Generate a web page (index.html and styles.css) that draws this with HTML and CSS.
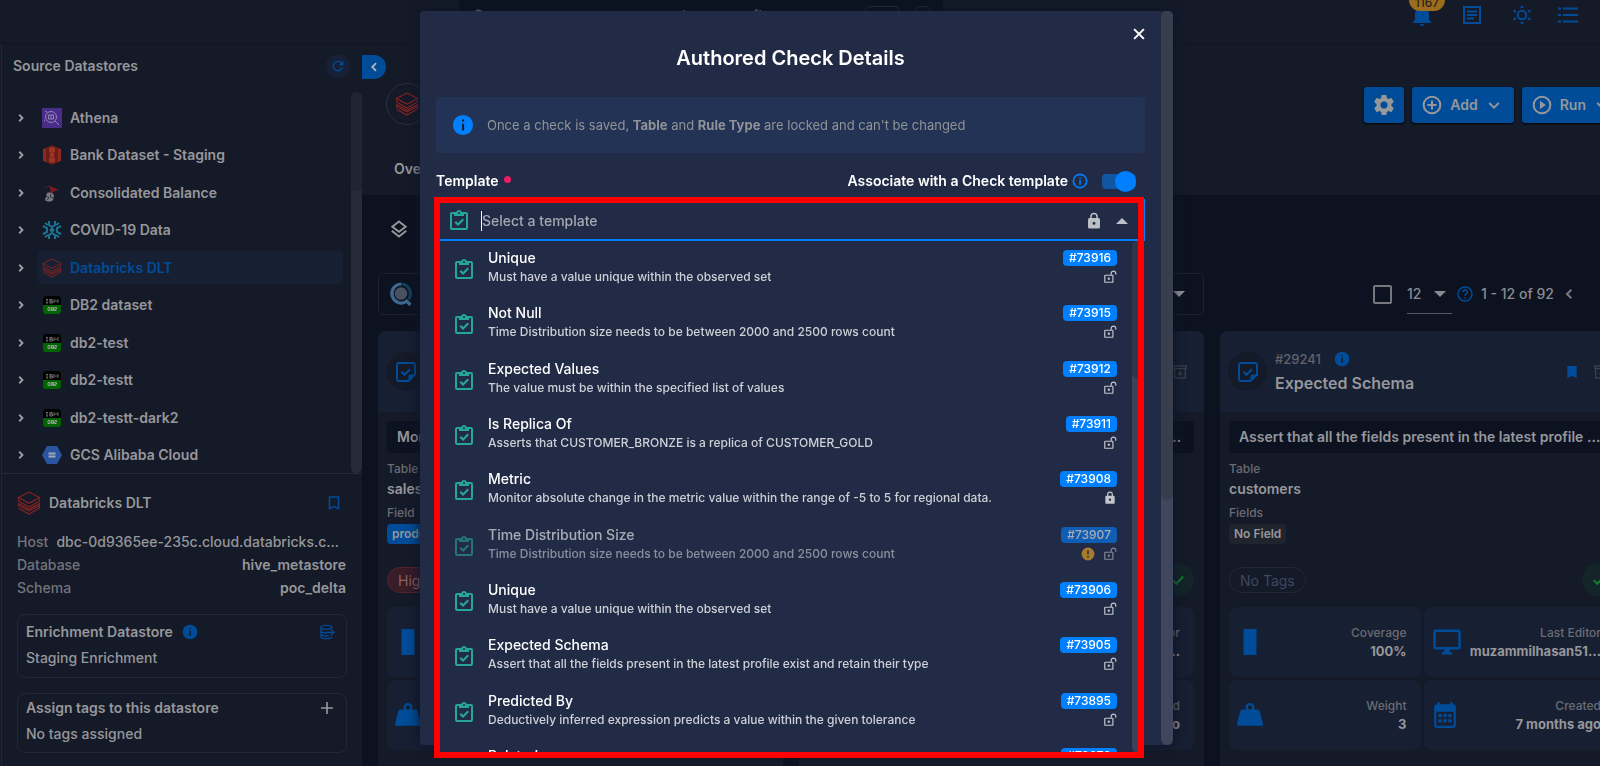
FILE: index.html
```
<!DOCTYPE html>
<html lang="en">
<head>
<meta charset="utf-8">
<title>Authored Check Details</title>
<link rel="stylesheet" href="styles.css">
</head>
<body>
<svg class="defs" aria-hidden="true">
  <symbol id="i-clip" viewBox="0 0 24 24"><path fill="currentColor" d="M19 3h-4.18C14.4 1.84 13.3 1 12 1s-2.4.84-2.82 2H5a2 2 0 0 0-2 2v14a2 2 0 0 0 2 2h14a2 2 0 0 0 2-2V5a2 2 0 0 0-2-2m-7 0a1 1 0 0 1 1 1 1 1 0 0 1-1 1 1 1 0 0 1-1-1 1 1 0 0 1 1-1M7 7h10V5h2v14H5V5h2v2m.5 6.500L9 12l2 2 4.500-4.500L17 11l-6 6-3.500-3.500z"/></symbol>
  <symbol id="i-lock" viewBox="0 0 24 24"><path fill="currentColor" d="M12 17a2 2 0 0 0 2-2 2 2 0 0 0-4 0 2 2 0 0 0 2 2m6-9a2 2 0 0 1 2 2v10a2 2 0 0 1-2 2H6a2 2 0 0 1-2-2V10a2 2 0 0 1 2-2h1V6a5 5 0 0 1 10 0v2h1m-6-5a3 3 0 0 0-3 3v2h6V6a3 3 0 0 0-3-3z"/></symbol>
  <symbol id="i-open" viewBox="0 0 24 24"><path fill="currentColor" d="M18 1c-2.760 0-5 2.240-5 5v2H4a2 2 0 0 0-2 2v10a2 2 0 0 0 2 2h12a2 2 0 0 0 2-2V10a2 2 0 0 0-2-2h-1V6a3 3 0 0 1 6 0v2h2V6c0-2.760-2.240-5-5-5m-2 9v10H4V10h12m-6 3a2 2 0 1 0 0 4 2 2 0 0 0 0-4z"/></symbol>
  <symbol id="i-info" viewBox="0 0 24 24"><circle cx="12" cy="12" r="11" fill="currentColor"/><path fill="#151a29" d="M11 10.500h2.200V18H11zM11 6h2.200v2.300H11z"/></symbol>
  <symbol id="i-info-o" viewBox="0 0 24 24"><circle cx="12" cy="12" r="10" fill="none" stroke="currentColor" stroke-width="2.400"/><path fill="currentColor" d="M11 10.500h2.200V17.500H11zM11 6.500h2.200v2.300H11z"/></symbol>
  <symbol id="i-right" viewBox="0 0 24 24"><path d="M8.500 5.500 15 12l-6.500 6.500" fill="none" stroke="currentColor" stroke-width="3.600"/></symbol>
  <symbol id="i-left" viewBox="0 0 24 24"><path d="M15.500 5.500 9 12l6.500 6.500" fill="none" stroke="currentColor" stroke-width="3.200"/></symbol>
  <symbol id="i-down" viewBox="0 0 24 24"><path d="m5 9 7 7 7-7" fill="none" stroke="currentColor" stroke-width="2.800"/></symbol>
  <symbol id="i-caret" viewBox="0 0 12 6"><path fill="currentColor" d="M0 0h12L6 6z"/></symbol>
  <symbol id="i-bricks" viewBox="0 0 24 24"><path d="M1.500 6.500 12 1l10.500 5.500L12 12.300zM1.500 6.500V10L12 16l10.500-6V7.500M1.500 12.500v2.200L12 20l10.500-5.500M1.500 12.500 12 18.300l10.500-5.800v4.500L12 23 1.500 17.300" fill="none" stroke="currentColor" stroke-width="1.100"/></symbol>
  <symbol id="i-note" viewBox="0 0 24 24"><path d="M5 3h14a2 2 0 0 1 2 2v9.500L14.500 21H5a2 2 0 0 1-2-2V5a2 2 0 0 1 2-2z" fill="none" stroke="currentColor" stroke-width="2"/><path d="M14.500 21v-4.500a2 2 0 0 1 2-2H21z" fill="currentColor"/><path d="m7.500 11.700 3 3 5.500-5.500" fill="none" stroke="currentColor" stroke-width="2.200"/></symbol>
  <symbol id="i-mark" viewBox="0 0 24 24"><path fill="currentColor" d="M5 3h14v18l-7-3-7 3z"/></symbol>
  <symbol id="i-mark-o" viewBox="0 0 24 24"><path d="M6 4h12v15.500l-6-2.600-6 2.600z" fill="none" stroke="currentColor" stroke-width="2"/></symbol>
  <symbol id="i-archive" viewBox="0 0 24 24"><path fill="currentColor" d="M2 2h20v6h-1v14H3V8H2V2m2 2v2h16V4H4m1 4v12h14V8H5m6 2h2v4h3l-4 4-4-4h3z"/></symbol>
  <symbol id="i-weight" viewBox="0 0 24 24"><path fill="currentColor" fill-rule="evenodd" d="M12 1a4 4 0 0 1 3.500 6H19a2 2 0 0 1 1.900 1.400l3 11.500A1.500 1.500 0 0 1 22.400 22H1.600A1.500 1.500 0 0 1 .1 19.900l3-11.500A2 2 0 0 1 5 7h3.500A4 4 0 0 1 12 1m0 2a2 2 0 1 0 0 4 2 2 0 0 0 0-4z"/></symbol>
  <symbol id="i-screen" viewBox="0 0 24 24"><path fill="currentColor" d="M21 16H3V4h18m0-2H3a2 2 0 0 0-2 2v12a2 2 0 0 0 2 2h7v2H8v2h8v-2h-2v-2h7a2 2 0 0 0 2-2V4a2 2 0 0 0-2-2z"/></symbol>
  <symbol id="i-cal" viewBox="0 0 24 24"><path fill="currentColor" fill-rule="evenodd" d="M5 0h2v2h10V0h2v2a3 3 0 0 1 3 3v16a3 3 0 0 1-3 3H5a3 3 0 0 1-3-3V5a3 3 0 0 1 3-3zM4 9v12q0 1 1 1h14q1 0 1-1V9zM6 11h3v3H6zm4.500 0h3v3h-3zM15 11h3v3h-3zM6 16h3v3H6zm4.500 0h3v3h-3zM15 16h3v3h-3z"/></symbol>
  <symbol id="i-check" viewBox="0 0 24 24"><path d="m3 12.500 6 6L21 6" fill="none" stroke="currentColor" stroke-width="3.500"/></symbol>
  <symbol id="i-qlens" viewBox="0 0 24 24"><path d="M12 2a9.500 9.500 0 1 0 5.500 17.500" fill="none" stroke="#3d6a92" stroke-width="3.200"/><path d="M12 2a9.500 9.500 0 0 1 7.500 15.200" fill="none" stroke="#134057" stroke-width="3.200"/><path d="m16.500 18 5 5" stroke="#3d6a92" stroke-width="3.200"/><circle cx="12" cy="11.500" r="6.300" fill="#4a5261"/></symbol>
  <symbol id="i-db2" viewBox="0 0 18 18"><rect width="18" height="18" rx="3" fill="#006400"/><path d="M0 9V3a3 3 0 0 1 3-3h12a3 3 0 0 1 3 3v6z" fill="#000"/><path d="M3 3.500h2M3 7h2M4 3.500V7M6.500 3.500H9v1.700H6.500M9 5.200h.500V7h-3M7 3.500V7M11 7V3.500l2 2.200 2-2.200V7" fill="none" stroke="#777" stroke-width=".9"/><path d="M5 11.500v3h2v-3zM8.500 11.500v3h2v-3zM8.500 13h2M11.500 11.500h2V13h-2v1.500h2" fill="none" stroke="#a0a8a0" stroke-width=".9"/></symbol>
</svg>

<div class="app">
  <header class="topbar">
    <div class="search">
      <svg class="s18" viewBox="0 0 24 24"><circle cx="10" cy="10" r="7" fill="none" stroke="currentColor" stroke-width="2"/><path d="m15 15 7 7" stroke="currentColor" stroke-width="2"/></svg>
      <input class="search-input" type="text" aria-label="Search" placeholder="Search datastores, containers and fields">
      <kbd class="key">Ctrl</kbd><kbd class="key key-s">K</kbd>
    </div>
    <nav class="top-icons">
      <button class="ib bell" aria-label="Notifications"><svg class="s24" viewBox="0 0 24 24"><path fill="currentColor" d="M21 19v1H3v-1l2-2v-6c0-3.100 2-5.800 5-6.700V4a2 2 0 0 1 4 0v.3c3 .9 5 3.600 5 6.700v6l2 2m-7 2a2 2 0 0 1-4 0"/></svg><span class="count">1167</span></button>
      <button class="ib" aria-label="Docs"><svg class="s24" viewBox="0 0 24 24"><path d="M4 4h16v16H4zM7 8.500h10M7 12h10M7 15.500h7" fill="none" stroke="currentColor" stroke-width="2"/></svg></button>
      <button class="ib" aria-label="Theme"><svg class="s24" viewBox="0 0 24 24"><circle cx="12" cy="12" r="4.200" fill="none" stroke="currentColor" stroke-width="2"/><path fill="currentColor" d="m12 2 2 3h-4zM12 22l2-3h-4zM3 7l3.600.2-1.900 3.200zM21 7l-3.600.2 1.900 3.200zM3 17l3.600-.2-1.900-3.200zM21 17l-3.600-.2 1.900-3.200z"/></svg></button>
      <button class="ib" aria-label="Menu"><svg class="s24" viewBox="0 0 24 24"><path d="M7 5.500h15M7 12h15M7 18.500h15M2 5.500h3M2 12h3M2 18.500h3" stroke="currentColor" stroke-width="2"/></svg></button>
    </nav>
  </header>

  <div class="body">
    <aside class="side">
      <div class="side-head"><h2 class="side-title">Source Datastores</h2>
        <button class="round" aria-label="Refresh"><svg class="s16" viewBox="0 0 24 24"><path fill="currentColor" d="M17.650 6.350A8 8 0 1 0 19.730 14h-2.080A6 6 0 1 1 12 6c1.660 0 3.140.69 4.220 1.780L13 11h7V4z"/></svg></button>
      </div>
      <div class="tree-wrap">
        <ul class="tree">
          <li class="node"><button class="exp" aria-label="Expand"><svg class="s12"><use href="#i-right"/></svg></button><a class="ds" href="#"><svg class="s20" viewBox="0 0 20 20"><path fill="#4a2c8a" d="M0 0h20v20H0z"/><circle cx="9" cy="9" r="5.500" fill="none" stroke="#8f86b0"/><path d="M6.500 7h5v4h-5zM9 7v4M13 13l4 4M5 4 3 3M3 12l-1 1" fill="none" stroke="#8f86b0"/></svg>Athena</a></li>
          <li class="node"><button class="exp" aria-label="Expand"><svg class="s12"><use href="#i-right"/></svg></button><a class="ds" href="#"><svg class="s20" viewBox="0 0 20 20"><path fill="#8a2a20" d="m1 4 3-1v14l-3-1zM19 4l-3-1v14l3-1z"/><path fill="#6e1c16" d="m4 3 6-3v20l-6-3zM16 3l-6-3v20l6-3z"/><path fill="#9c3527" d="m7 7 3 1 3-1v-4l-3-1-3 1zM7 13l3-1 3 1v4l-3 1-3-1zM8 8h4v4H8z"/></svg>Bank Dataset - Staging</a></li>
          <li class="node"><button class="exp" aria-label="Expand"><svg class="s12"><use href="#i-right"/></svg></button><a class="ds" href="#"><svg class="s20" viewBox="0 0 20 20"><path fill="#7b1a24" d="M6 2c3 2 8 3 11 5-4 0-6 2-9 6 1-4 1-7-2-11z"/><path fill="#777b80" d="M5 10c3-1 6 0 7 2l-1 5c-2 2-6 2-8 0z"/><path d="m4 13 3 2-2 2m4-6-1 3 3 1M3 3l2 2" fill="none" stroke="#33363d"/></svg>Consolidated Balance</a></li>
          <li class="node"><button class="exp" aria-label="Expand"><svg class="s12"><use href="#i-right"/></svg></button><a class="ds" href="#"><svg class="s20" viewBox="0 0 20 20"><path d="M7 1v4l3 2 3-2V1M7 19v-4l3-2 3 2v4M1 6l4 2v4l-4 2M19 6l-4 2v4l4 2M3 3l3 2M17 3l-3 2M3 17l3-2M17 17l-3-2M8.500 10 10 8.500l1.500 1.500-1.500 1.500z" fill="none" stroke="#1b7592" stroke-width="2"/></svg>COVID-19 Data</a></li>
          <li class="node"><button class="exp" aria-label="Expand"><svg class="s12"><use href="#i-right"/></svg></button><a class="ds on" href="#"><svg class="s20 red"><use href="#i-bricks"/></svg>Databricks DLT</a></li>
          <li class="node"><button class="exp" aria-label="Expand"><svg class="s12"><use href="#i-right"/></svg></button><a class="ds" href="#"><svg class="s18 db2"><use href="#i-db2"/></svg>DB2 dataset</a></li>
          <li class="node"><button class="exp" aria-label="Expand"><svg class="s12"><use href="#i-right"/></svg></button><a class="ds" href="#"><svg class="s18 db2"><use href="#i-db2"/></svg>db2-test</a></li>
          <li class="node"><button class="exp" aria-label="Expand"><svg class="s12"><use href="#i-right"/></svg></button><a class="ds" href="#"><svg class="s18 db2"><use href="#i-db2"/></svg>db2-testt</a></li>
          <li class="node"><button class="exp" aria-label="Expand"><svg class="s12"><use href="#i-right"/></svg></button><a class="ds" href="#"><svg class="s18 db2"><use href="#i-db2"/></svg>db2-testt-dark2</a></li>
          <li class="node"><button class="exp" aria-label="Expand"><svg class="s12"><use href="#i-right"/></svg></button><a class="ds" href="#"><svg class="s20" viewBox="0 0 20 20"><path fill="#2b54a0" d="M5 1h10l5 9-5 9H5l-5-9z"/><path fill="#a0a8b8" d="M6.500 7.500h7v2h-7zM6.500 10.500h7v2h-7z"/></svg>GCS Alibaba Cloud</a></li>
        </ul>
        <div class="bar side-bar"><div class="thumb side-thumb"></div></div>
      </div>
      <section class="detail">
        <div class="detail-head"><svg class="s24 red"><use href="#i-bricks"/></svg><h3 class="side-title">Databricks DLT</h3><button class="ib end" aria-label="Bookmark"><svg class="s18"><use href="#i-mark-o"/></svg></button></div>
        <dl class="facts">
          <div class="fact"><dt>Host</dt><dd class="host">dbc-0d9365ee-235c.cloud.databricks.c…</dd></div>
          <div class="fact"><dt>Database</dt><dd>hive_metastore</dd></div>
          <div class="fact"><dt>Schema</dt><dd>poc_delta</dd></div>
        </dl>
        <div class="box"><div class="box-row"><strong>Enrichment Datastore</strong><svg class="s16 blue"><use href="#i-info"/></svg><button class="ib end" aria-label="Open enrichment"><svg class="s16" viewBox="0 0 24 24"><ellipse cx="11" cy="5" rx="8" ry="3" fill="none" stroke="currentColor" stroke-width="2"/><path d="M3 5v14c0 4 16 4 16 0M3 10c0 4 12 4 14 1.500M3 15c0 3 8 3.500 12 2.500M19 5v2M10 12.500h12M18 8.500l4.500 4-4.500 4" fill="none" stroke="currentColor" stroke-width="2"/></svg></button></div><p>Staging Enrichment</p></div>
        <div class="box"><div class="box-row"><strong>Assign tags to this datastore</strong><button class="ib end plus" aria-label="Add tag"><svg class="s16" viewBox="0 0 24 24"><path d="M12 3v18M3 12h18" stroke="currentColor" stroke-width="2.500"/></svg></button></div><p>No tags assigned</p></div>
      </section>
    </aside>

    <main class="main">
      <button class="collapse" aria-label="Collapse"><svg class="s14"><use href="#i-left"/></svg></button>
      <section class="hero">
        <div class="hero-row">
          <div class="logo"><svg class="s24 red"><use href="#i-bricks"/></svg></div>
          <div class="actions">
            <button class="btn" aria-label="Settings"><svg class="s20" viewBox="2 2 20 20"><path fill="currentColor" d="M12 15.500A3.500 3.500 0 1 1 12 8.500a3.500 3.500 0 0 1 0 7m7.430-2.530c.04-.32.07-.64.07-.97s-.03-.66-.07-1l2.110-1.630c.19-.15.24-.42.12-.64l-2-3.460c-.12-.22-.39-.31-.61-.22l-2.490 1c-.52-.39-1.060-.73-1.690-.98l-.37-2.650A.5.5 0 0 0 14 2h-4c-.25 0-.46.18-.5.42l-.37 2.650c-.63.25-1.170.59-1.690.98l-2.490-1c-.22-.09-.49 0-.61.22l-2 3.460c-.13.22-.07.49.12.64L4.570 11c-.04.34-.07.67-.07 1s.03.65.07.97l-2.110 1.660c-.19.15-.25.42-.12.64l2 3.460c.12.22.39.3.61.22l2.490-1.010c.52.4 1.060.74 1.690.99l.37 2.650c.04.24.25.42.5.42h4c.25 0 .46-.18.5-.42l.37-2.650c.63-.26 1.170-.59 1.690-.99l2.490 1.010c.22.08.49 0 .61-.22l2-3.460c.12-.22.07-.49-.12-.64z"/></svg></button>
            <button class="btn"><svg class="s20" viewBox="0 0 24 24"><circle cx="12" cy="12" r="10" fill="none" stroke="currentColor" stroke-width="2.400"/><path d="M12 6.500v11M6.500 12h11" stroke="currentColor" stroke-width="2.400"/></svg>Add<svg class="s16"><use href="#i-down"/></svg></button>
            <button class="btn"><svg class="s20" viewBox="0 0 24 24"><circle cx="12" cy="12" r="10" fill="none" stroke="currentColor" stroke-width="2.400"/><path fill="currentColor" d="m9.500 7 7 5-7 5z"/></svg>Run<svg class="s16"><use href="#i-down"/></svg></button>
          </div>
        </div>
        <a class="tab" href="#">Overview</a>
      </section>
      <section class="content">
        <svg class="s20 layers" viewBox="0 0 24 24"><path d="m12 3 8 6.200-8 6.200-8-6.200zM3.300 14.200 12 21l8.700-6.800" fill="none" stroke="currentColor" stroke-width="2.300"/></svg>
        <div class="grid filters">
          <div class="filter"><svg class="s24"><use href="#i-qlens"/></svg><svg class="caret end"><use href="#i-caret"/></svg></div>
          <div class="pager">
            <input class="tick" type="checkbox" aria-label="Select all">
            <span class="per"><select class="size" aria-label="Per page"><option>12</option></select><svg class="caret"><use href="#i-caret"/></svg></span>
            <svg class="s16 blue" viewBox="0 0 24 24"><circle cx="12" cy="12" r="10.500" fill="none" stroke="currentColor" stroke-width="2.200"/><path d="M8.500 9.500c0-4.500 7-4.500 7 0 0 2.500-3.500 2.500-3.500 5M12 16.500v2.200" fill="none" stroke="currentColor" stroke-width="2.200"/></svg>
            <span class="range">1 - 12 of 92</span>
            <button class="ib grey" aria-label="Previous"><svg class="s16"><use href="#i-left"/></svg></button>
          </div>
        </div>
        <div class="grid">
          <article class="card">
            <div class="card-head"><span class="disc"><svg class="s24"><use href="#i-note"/></svg></span><div><p class="num">#29243</p><h3 class="name">Metric</h3></div></div>
            <p class="desc">Monitor the value</p>
            <p class="lab">Table</p><p class="val">sales</p><p class="lab">Field</p><span class="chip chip-blue">product_id</span>
            <div class="tags"><span class="pill pill-red">High</span></div>
            <div class="tiles">
              <div class="tile"><svg class="s26" viewBox="0 0 24 24"><path fill="currentColor" d="M6 0h12v24H6z"/></svg></div>
              <div class="tile"></div>
              <div class="tile"><svg class="s26"><use href="#i-weight"/></svg></div>
              <div class="tile"></div>
            </div>
          </article>
          <article class="card">
            <div class="card-head"><svg class="s16 dimi end"><use href="#i-archive"/></svg></div>
            <p class="desc">Monitor absolute change in the metric value within the range</p>
            <p class="lab">Table</p><p class="val">customers</p><p class="lab">Fields</p><span class="chip">No Field</span>
            <div class="tags"><span class="pill">No Tags</span><span class="ok end"><svg class="s14"><use href="#i-check"/></svg></span></div>
            <div class="tiles">
              <div class="tile"></div>
              <div class="tile"><svg class="s28"><use href="#i-screen"/></svg><div class="tt"><p>Last Editor</p><b>muzammilhasan51…</b></div></div>
              <div class="tile"></div>
              <div class="tile"><svg class="s26"><use href="#i-cal"/></svg><div class="tt"><p>Created</p><b>7 months ago</b></div></div>
            </div>
          </article>
          <article class="card">
            <div class="card-head"><span class="disc"><svg class="s24"><use href="#i-note"/></svg></span><div><p class="num">#29241 <svg class="s16 blue"><use href="#i-info"/></svg></p><h3 class="name">Expected Schema</h3></div><svg class="s16 blue end"><use href="#i-mark"/></svg><svg class="s16 dimi"><use href="#i-archive"/></svg></div>
            <p class="desc">Assert that all the fields present in the latest profile …</p>
            <p class="lab">Table</p><p class="val">customers</p><p class="lab">Fields</p><span class="chip">No Field</span>
            <div class="tags"><span class="pill">No Tags</span><span class="ok end"><svg class="s14"><use href="#i-check"/></svg></span></div>
            <div class="tiles">
              <div class="tile"><svg class="s26" viewBox="0 0 24 24"><path fill="currentColor" d="M6 0h12v24H6z"/></svg><div class="tt"><p>Coverage</p><b>100%</b></div></div>
              <div class="tile"><svg class="s28"><use href="#i-screen"/></svg><div class="tt"><p>Last Editor</p><b>muzammilhasan51…</b></div></div>
              <div class="tile"><svg class="s26"><use href="#i-weight"/></svg><div class="tt"><p>Weight</p><b>3</b></div></div>
              <div class="tile"><svg class="s26"><use href="#i-cal"/></svg><div class="tt"><p>Created</p><b>7 months ago</b></div></div>
            </div>
          </article>
        </div>
      </section>
    </main>
  </div>
</div>

<div class="overlay">
  <div class="dialog" role="dialog" aria-labelledby="dlg">
    <div class="dlg-body">
      <button class="close" aria-label="Close"><svg class="s18" viewBox="0 0 24 24"><path d="m5.500 5.500 13 13M18.500 5.500l-13 13" stroke="currentColor" stroke-width="2.800"/></svg></button>
      <h1 class="dlg-title" id="dlg">Authored Check Details</h1>
      <div class="note"><svg class="s22"><use href="#i-info"/></svg><p>Once a check is saved, <b>Table</b> and <b>Rule Type</b> are locked and can't be changed</p></div>
      <div class="labels">
        <label class="flabel" for="tpl">Template<i class="req"></i></label>
        <label class="flabel assoc" for="assoc">Associate with a Check template <svg class="s16 bright"><use href="#i-info-o"/></svg></label>
        <input class="switch" id="assoc" type="checkbox" checked>
      </div>
      <div class="combo">
        <div class="field"><svg class="s24 teal"><use href="#i-clip"/></svg><input class="combo-input" id="tpl" type="text" placeholder="Select a template"><svg class="s18 pale"><use href="#i-lock"/></svg><svg class="caret pale up"><use href="#i-caret"/></svg></div>
        <div class="menu">
          <ul class="opts" role="listbox" id="opts">
            <li class="opt"><svg class="s24 teal"><use href="#i-clip"/></svg><div class="ot"><p class="on-name">Unique</p><p class="on-desc">Must have a value unique within the observed set</p></div><div class="meta"><span class="id">#73916</span><svg class="s14"><use href="#i-open"/></svg></div></li>
            <li class="opt"><svg class="s24 teal"><use href="#i-clip"/></svg><div class="ot"><p class="on-name">Not Null</p><p class="on-desc">Time Distribution size needs to be between 2000 and 2500 rows count</p></div><div class="meta"><span class="id">#73915</span><svg class="s14"><use href="#i-open"/></svg></div></li>
            <li class="opt"><svg class="s24 teal"><use href="#i-clip"/></svg><div class="ot"><p class="on-name">Expected Values</p><p class="on-desc">The value must be within the specified list of values</p></div><div class="meta"><span class="id">#73912</span><svg class="s14"><use href="#i-open"/></svg></div></li>
            <li class="opt"><svg class="s24 teal"><use href="#i-clip"/></svg><div class="ot"><p class="on-name">Is Replica Of</p><p class="on-desc">Asserts that CUSTOMER_BRONZE is a replica of CUSTOMER_GOLD</p></div><div class="meta"><span class="id">#73911</span><svg class="s14"><use href="#i-open"/></svg></div></li>
            <li class="opt"><svg class="s24 teal"><use href="#i-clip"/></svg><div class="ot"><p class="on-name">Metric</p><p class="on-desc">Monitor absolute change in the metric value within the range of -5 to 5 for regional data.</p></div><div class="meta"><span class="id">#73908</span><svg class="s14"><use href="#i-lock"/></svg></div></li>
            <li class="opt off"><svg class="s24 teal"><use href="#i-clip"/></svg><div class="ot"><p class="on-name">Time Distribution Size</p><p class="on-desc">Time Distribution size needs to be between 2000 and 2500 rows count</p></div><div class="meta"><span class="id">#73907</span><span class="pair"><svg class="s14" viewBox="0 0 24 24"><circle cx="12" cy="12" r="11" fill="#ffb020"/><path d="M12 6v7M12 15.500v2.500" stroke="#222b45" stroke-width="2.500"/></svg><svg class="s14"><use href="#i-open"/></svg></span></div></li>
            <li class="opt"><svg class="s24 teal"><use href="#i-clip"/></svg><div class="ot"><p class="on-name">Unique</p><p class="on-desc">Must have a value unique within the observed set</p></div><div class="meta"><span class="id">#73906</span><svg class="s14"><use href="#i-open"/></svg></div></li>
            <li class="opt"><svg class="s24 teal"><use href="#i-clip"/></svg><div class="ot"><p class="on-name">Expected Schema</p><p class="on-desc">Assert that all the fields present in the latest profile exist and retain their type</p></div><div class="meta"><span class="id">#73905</span><svg class="s14"><use href="#i-open"/></svg></div></li>
            <li class="opt"><svg class="s24 teal"><use href="#i-clip"/></svg><div class="ot"><p class="on-name">Predicted By</p><p class="on-desc">Deductively inferred expression predicts a value within the given tolerance</p></div><div class="meta"><span class="id">#73895</span><svg class="s14"><use href="#i-open"/></svg></div></li>
            <li class="opt"><svg class="s24 teal"><use href="#i-clip"/></svg><div class="ot"><p class="on-name">Related</p><p class="on-desc">Must match</p></div><div class="meta"><span class="id">#73879</span><svg class="s14"><use href="#i-open"/></svg></div></li>
          </ul>
          <div class="bar menu-bar"><div class="thumb menu-thumb"></div></div>
        </div>
        <div class="frame"></div>
      </div>
    </div>
    <div class="bar dlg-bar"><div class="thumb dlg-thumb"></div></div>
  </div>
</div>
</body>
</html>
```
FILE: styles.css
```
* { box-sizing: border-box; }
body { margin: 0; height: 100vh; overflow: hidden; background: #151a29; color: #96979a; font: 500 14px/20px Inter, "Open Sans", sans-serif; }
p, h1, h2, h3, ul, dl, dd { margin: 0; padding: 0; list-style: none; }
button, input, select { font: inherit; color: inherit; background: none; border: 0; padding: 0; margin: 0; }
a { color: inherit; text-decoration: none; }
svg { flex: none; display: block; }
.defs { position: absolute; width: 0; height: 0; }
.s12 { width: 12px; height: 12px; }
.s14 { width: 14px; height: 14px; }
.s16 { width: 16px; height: 16px; }
.s18 { width: 18px; height: 18px; }
.s20 { width: 20px; height: 20px; }
.s22 { width: 22px; height: 22px; }
.s24 { width: 24px; height: 24px; }
.s26 { width: 26px; height: 26px; }
.s28 { width: 30px; height: 30px; }
.caret { width: 12px; height: 6px; }
.end { margin-left: auto; }
.ib { display: flex; color: #004c99; }
.grey { color: #75777d; }
.blue { color: #004c99; }
.red { color: #8a2422; }
.teal { color: #26a69a; }
.pale { color: #bdbfc7; }
.bright { color: #0080ff; }
.dimi { color: #3c4048; }

.app { height: 100vh; display: flex; flex-direction: column; overflow: hidden; }
.topbar { flex: none; height: 44px; display: flex; justify-content: space-between; padding: 0 20px 0 459px; border-bottom: 1px solid #111624; }
.search { width: 484px; height: 33px; display: flex; align-items: center; gap: 14px; padding: 0 12px; background: #0d1221; color: #85868b; }
.search-input { flex: 1; min-width: 0; font-size: 15px; }
.search-input::placeholder { color: #85868b; opacity: 1; }
.key { width: 35px; height: 22px; border: 1px solid #2a2f3e; border-radius: 6px; font: 12px/22px Inter, sans-serif; text-align: center; }
.key-s { width: 17px; }
.top-icons { display: flex; gap: 26px; height: 30px; align-items: center; }
.top-icons .ib { position: relative; }
.top-icons .ib:last-child { margin-left: -4px; }
.count { position: absolute; left: -1px; top: -14px; width: 36px; height: 22px; border-radius: 11px; background: #9c6d1c; color: #2a2218; font-size: 12px; line-height: 28px; }

.body { flex: 1; display: flex; min-height: 0; }
.side { flex: none; width: 361px; display: flex; flex-direction: column; border-left: 1px solid #222736; margin-left: 1px; }
.side-head { height: 48px; display: flex; align-items: center; justify-content: space-between; padding: 0 12px 4px 11px; }
.side-title { font-size: 14px; font-weight: 600; }
.round { width: 24px; height: 24px; border-radius: 12px; background: #162036; color: #004c99; display: grid; place-items: center; }
.tree-wrap { display: flex; height: 382px; border-bottom: 1px solid #262b39; }
.tree { flex: 1; height: 382px; padding-top: 7px; display: grid; grid-template-rows: repeat(10, 1fr); }
.node { display: flex; align-items: center; padding: 0 8px 0 13px; }
.exp { width: 23px; display: flex; }
.ds { flex: 1; height: 33px; display: flex; align-items: center; gap: 8px; padding-left: 4px; border-radius: 4px; font-weight: 600; }
.exp svg { color: #a0a0a2; }
.db2 { margin: 0 1px; }
.on { background: #171f33; color: #004c99; }
.bar { flex: none; border-radius: 6px; background: #262b3a; }
.thumb { border-radius: 6px; background: #212431; }
.side-bar { width: 11px; }
.side-thumb { height: 99px; }
.detail { padding: 17px 16px 0 15px; }
.detail-head { display: flex; align-items: center; gap: 8px; padding-right: 3px; }
.facts { padding-top: 15px; }
.fact { display: flex; justify-content: space-between; line-height: 23px; color: #73757b; font-weight: 500; }
.fact dd { color: #96979a; font-weight: 600; }
.fact .host { padding-right: 7px; white-space: nowrap; font-weight: 500; }
.box { margin: 15px -1px 0 0; height: 64px; padding: 7px 8px; border: 1px solid #222837; border-radius: 8px; }
.box + .box { margin-top: 15px; height: 60px; padding-top: 4px; }
.box-row { display: flex; align-items: center; gap: 9px; height: 20px; margin-bottom: 6px; }
.box strong { font-weight: 600; }
.plus { color: #96979a; padding-right: 3px; }
.box-row .ib { padding-right: 3px; }

.main { flex: 1; min-width: 0; position: relative; display: flex; flex-direction: column; overflow: hidden; }
.collapse { position: absolute; left: 0; top: 11px; width: 24px; height: 24px; border-radius: 0 12px 12px 0; background: #004c99; color: #b0b2b6; display: grid; place-items: center; }
.hero { height: 151px; flex: none; padding: 39px 0 0 24px; }
.hero-row { display: flex; justify-content: space-between; margin-right: -22px; }
.logo { width: 42px; height: 42px; border: 1px solid #2a2f3c; border-radius: 21px; display: grid; place-items: center; }
.actions { display: flex; gap: 8px; padding-top: 4px; }
.btn { height: 36px; display: flex; align-items: center; gap: 8px; padding: 0 12px 0 10px; border-radius: 3px; background: #004c99; color: #96979a; font-weight: 600; box-shadow: 0 1px 2px #000; }
.btn:first-child { padding: 0 10px; }
.tab { display: inline-block; margin: 34px 0 0 8px; font-weight: 600; }
.content { flex: 1; background: #0d1221; padding: 0 0 0 16px; margin-right: -25px; }
.layers { margin: 24px 0 34px 11px; color: #96979a; }
.grid { display: grid; grid-template-columns: repeat(3, 1fr); column-gap: 16px; }
.filter { grid-column: span 2; height: 42px; display: flex; align-items: center; padding: 0 18px 0 10px; border: 1px solid #1c2231; border-radius: 5px; color: #96979a; }
.pager { display: flex; align-items: center; margin-left: 153px; color: #8a8c91; }
.tick { appearance: none; width: 19px; height: 19px; border: 2px solid #75777d; border-radius: 2px; margin-right: 15px; }
.per { display: flex; align-items: center; width: 45px; height: 40px; border-bottom: 1px solid #55585f; margin-right: 5px; }
.size { appearance: none; width: 27px; }
.range { margin: 0 7px 0 8px; white-space: nowrap; }
.filters { margin-bottom: 16px; }

.card { height: 460px; border-radius: 8px; background: #151a29; overflow: hidden; padding: 0 10px 0 9px; }
.card-head { height: 81px; margin: 0 -10px 9px -9px; padding: 0 16px 0 8px; display: flex; align-items: center; background: #171f33; gap: 8px; }
.disc { width: 39px; height: 39px; border-radius: 20px; background: #151a29; display: grid; place-items: center; color: #004c99; }
.num { display: flex; gap: 13px; align-items: center; font-size: 13px; height: 22px; color: #606369; }
.name { font-size: 16px; font-weight: 600; line-height: 26px; }
.card-head .dimi { margin-left: 5px; }
.card:nth-child(2) .dimi { margin-left: auto; }
.desc { height: 32px; line-height: 31px; padding: 0 10px; margin-bottom: 6px; background: #0d1221; border-radius: 4px; font-weight: 600; white-space: nowrap; overflow: hidden; text-overflow: ellipsis; }
.lab { font-size: 12px; line-height: 20px; color: #6a6c72; }
.val { font-weight: 600; line-height: 20px; margin-bottom: 4px; }
.chip { display: inline-block; height: 20px; margin-top: 1px; padding: 0 5px; border-radius: 4px; background: #20242f; font-size: 12px; font-weight: 600; line-height: 20px; }
.chip-blue { background: #004c99; }
.tags { display: flex; align-items: center; height: 33px; margin: 19px 0 11px; }
.pill { height: 26px; padding: 0 10px; border: 1px solid #222736; border-radius: 13px; color: #3f4762; line-height: 25px; font-weight: 400; }
.pill-red { background: #381c28; border-color: #54242e; color: #8d6066; }
.ok { width: 33px; height: 33px; border-radius: 17px; background: #14252a; color: #147a30; display: grid; place-items: center; }
.tiles { display: grid; grid-template-columns: 1fr 1fr; gap: 3px; }
.tile { height: 70px; border-radius: 8px; background: #171f33; color: #004c99; display: flex; align-items: center; justify-content: space-between; padding: 0 14px 0 8px; }
.tt { text-align: right; color: #6a6c72; line-height: 18px; font-size: 12px; white-space: nowrap; }
.tt b { font-size: 13px; font-weight: 700; color: #96979a; }

.overlay { position: fixed; inset: 0; display: flex; justify-content: center; padding: 11px 7px 21px 0; }
.dialog { width: 753px; display: flex; border-radius: 4px; background: #222b45; color: #fff; box-shadow: 0 0 14px #0a1424; }
.dlg-body { flex: 1; min-width: 0; padding: 0 16px; position: relative; }
.dlg-bar { width: 12px; background: #3f465e; }
.dlg-thumb { height: 489px; background: #393e4f; }
.close { position: absolute; right: 13px; top: 14px; }
.dlg-title { padding-top: 34px; font-size: 20px; font-weight: 600; line-height: 26px; text-align: center; }
.note { height: 56px; margin-top: 26px; padding: 0 16px; display: flex; align-items: center; gap: 13px; background: #223355; border-radius: 4px; color: #0080ff; }
.note p { color: #919396; font-weight: 400; font-size: 13px; }
.note b { font-weight: 700; }
.labels { display: flex; align-items: center; height: 46px; padding: 10px 9px 0 0; }
.flabel { display: flex; align-items: center; font-weight: 600; }
.req { width: 7px; height: 7px; border-radius: 4px; background: #e91e63; margin: 0 0 4px 5px; }
.assoc { margin-left: auto; gap: 4px; }
.switch { appearance: none; position: relative; width: 34px; height: 21px; margin-left: 14px; background: linear-gradient(#1156a2 0 0) center / 100% 15px no-repeat; border-radius: 8px; }
.switch::after { content: ""; position: absolute; right: 0; top: 0; width: 21px; height: 21px; border-radius: 11px; background: #0080ff; }
.combo { position: relative; }
.field { height: 42px; display: flex; align-items: center; padding: 2px 16px 0 10px; border: 1px solid #0080ff; border-bottom-width: 2px; }
.combo-input { flex: 1; min-width: 0; margin-left: 10px; outline: 0; border-left: 1px solid #fff; }
.combo-input::placeholder { color: #a5a8b3; opacity: 1; }
.up { transform: rotate(180deg); margin-left: 13px; }
.menu { position: absolute; left: 0; right: 1px; top: 42px; height: 512px; overflow: hidden; display: flex; background: #222b45; }
.opts { flex: 1; min-width: 0; height: 553px; display: grid; grid-template-rows: repeat(10, 1fr); }
.opt { display: flex; align-items: center; padding: 0 15px 3px 16px; }
.opt > svg { margin-top: 6px; }
.ot { flex: 1; min-width: 0; margin-left: 12px; }
.on-name { line-height: 20px; }
.on-desc { font-size: 12px; line-height: 18px; color: #cdd0d6; white-space: nowrap; }
.meta { display: flex; flex-direction: column; align-items: flex-end; gap: 4px; color: #c4c6cd; }
.id { height: 16px; padding: 0 6px; border-radius: 4px; background: #0080ff; color: #fff; font-size: 12px; line-height: 16px; }
.pair { display: flex; gap: 8px; }
.off { opacity: .6; }
.menu-bar { width: 12px; background: #3b4358; }
.menu-thumb { height: 138px; background: #30374c; }
.frame { position: absolute; left: -2px; right: 1px; top: -2px; height: 561px; border: 6px solid #f00; }
```
